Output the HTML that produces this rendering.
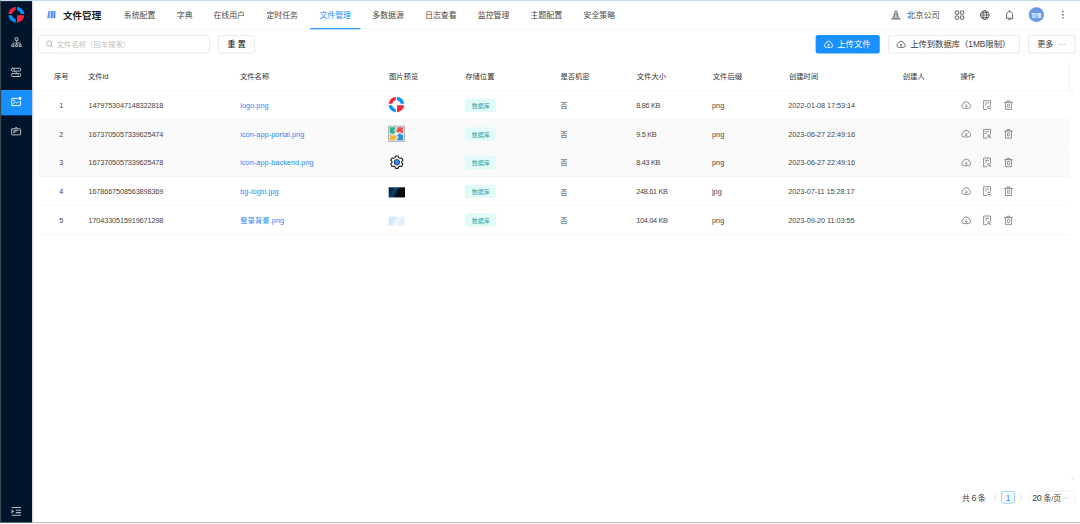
<!DOCTYPE html>
<html lang="zh-CN">
<head>
<meta charset="utf-8">
<title>文件管理</title>
<style>
html,body{margin:0;padding:0;background:#fff;overflow:hidden;}
body{width:1080px;height:524px;position:relative;font-family:"Liberation Sans", "Noto Sans CJK SC", sans-serif;}
#app{position:absolute;left:0;top:0;width:1920px;height:932px;transform:scale(0.5625);transform-origin:0 0;overflow:hidden;background:#fff;}
.a{position:absolute;box-sizing:border-box;}
.t{white-space:nowrap;}
</style>
</head>
<body>
<div id="app">
<div class="a " style="left:56.89px;top:2.31px;width:1863.11px;height:50.31px;background:#fff;border-bottom:1px solid #f0f0f0;"></div>
<div class="a " style="left:0.0px;top:0.0px;width:56.89px;height:929.33px;background:#001529;box-shadow:2px 0 6px rgba(0,21,41,.25);"></div>
<div class="a " style="left:0.0px;top:0.0px;width:1.69px;height:929.33px;background:#3a4550;"></div>
<div class="a " style="left:0.0px;top:0.0px;width:1920.0px;height:2.4px;background:#c3dcec;"></div>
<div class="a " style="left:0.0px;top:0.0px;width:1.69px;height:2.4px;background:#a3abaf;"></div>
<div class="a " style="left:56.89px;top:928.27px;width:1863.11px;height:1.33px;background:#c2c2c2;"></div>
<div class="a " style="left:0.0px;top:929.6px;width:1920.0px;height:2.84px;background:#fafafa;"></div>
<svg class="a" style="left:13.78px;top:11.38px;" width="30.22" height="30.22" viewBox="-8.5 -8.5 17.0 17.0"><path fill="#f7243f" d="M-0.680 -7.971A8.0 8.0 0 0 0 -7.971 -0.680L-4.347 -0.680A4.4 4.4 0 0 1 -0.680 -4.347Z"/><path fill="#0091ff" d="M0.680 -7.971A8.0 8.0 0 0 1 7.971 -0.680L4.347 -0.680A4.4 4.4 0 0 0 0.680 -4.347Z"/><path fill="#0091ff" d="M-0.680 7.971A8.0 8.0 0 0 1 -7.971 0.680L-4.347 0.680A4.4 4.4 0 0 0 -0.680 4.347Z"/><path fill="#f7243f" d="M0.680 7.971A8.0 8.0 0 0 0 7.971 0.680L0.680 0.680Z"/></svg>
<svg class="a" style="left:18.67px;top:65.42px;" width="21.33" height="21.33" viewBox="0 0 24 24"><g fill="none" stroke="#b4bcc4" stroke-width="2" stroke-linejoin="round" stroke-linecap="round"><rect x="9.500" y="2.500" width="5" height="5" stroke-width="1.800"/><path d="M12 8V13M4.500 16V13H19.500V16" stroke-width="1.600"/><rect x="3" y="16.500" width="3.500" height="3.500" stroke-width="1.800"/><rect x="10.250" y="16.500" width="3.500" height="3.500" stroke-width="1.800"/><rect x="17.500" y="16.500" width="3.500" height="3.500" stroke-width="1.800"/><path d="M12 13V16" stroke-width="1.600"/></g></svg>
<svg class="a" style="left:18.13px;top:117.69px;" width="21.33" height="21.33" viewBox="0 0 24 24"><g fill="none" stroke="#b4bcc4" stroke-width="2" stroke-linejoin="round" stroke-linecap="round"><rect x="3" y="3.800" width="18" height="5.800" rx="1.500"/><rect x="3" y="14.400" width="18" height="5.800" rx="1.500"/><path d="M9 9.600L15 14.400M7 6.700H9M15 17.300H17" stroke-width="1.600"/></g></svg>
<div class="a " style="left:1.69px;top:160.0px;width:55.2px;height:44.8px;background:#1890ff;"></div>
<svg class="a" style="left:18.49px;top:170.49px;" width="21.33" height="21.33" viewBox="0 0 24 24"><g fill="none" stroke="#fff" stroke-width="2" stroke-linejoin="round" stroke-linecap="round"><path d="M14 5.500H3.500V20H20.500V11" /><path d="M6.500 9.500H9M6.500 16L10 12.500L13 15L16.500 12.500" stroke-width="1.600"/><circle cx="19.500" cy="5.500" r="3" fill="#fff" stroke="none"/></g></svg>
<svg class="a" style="left:18.49px;top:222.22px;" width="21.33" height="21.33" viewBox="0 0 24 24"><g fill="none" stroke="#b4bcc4" stroke-width="2" stroke-linejoin="round" stroke-linecap="round"><rect x="3" y="8" width="18" height="12" rx="1"/><path d="M9.500 7.500L12 4.500L14.500 7.500"/><path d="M7.500 16.500V11.500H16M7.500 14H12" stroke-width="1.800"/></g></svg>
<svg class="a" style="left:17.96px;top:898.31px;" width="22.04" height="22.04" viewBox="0 0 24 24"><g fill="none" stroke="#b4bcc4" stroke-width="2" stroke-linejoin="round" stroke-linecap="round"><path d="M3 4.500H21M11 10H21M11 14.500H21M3 19.500H21" stroke-linecap="butt"/><path d="M3.500 9.500L7.500 12.200L3.500 15Z" fill="#b4bcc4" stroke-width="1"/></g></svg>
<svg class="a" style="left:83.2px;top:18.31px;" width="16.0" height="16.0" viewBox="0 0 12 12"><g><path d="M2.300 1.300H5.400L3.700 10.700H0.600Z" fill="#6a99fa"/><path d="M6.000 1.300H8.900L7.900 10.700H4.900Z" fill="#5b8ff9"/><path d="M9.300 1.300H11.800V10.700H8.800Z" fill="#4d80f2"/></g></svg>
<div class="a t" style="left:112.0px;top:12.91px;height:30px;line-height:30px;font-size:17px;color:#1a1a1a;font-weight:700;">文件管理</div>
<div class="a t" style="left:220.09px;top:12.2px;height:30px;line-height:30px;font-size:14px;color:#484848;font-weight:400;">系统配置</div>
<div class="a t" style="left:314.31px;top:12.2px;height:30px;line-height:30px;font-size:14px;color:#484848;font-weight:400;">字典</div>
<div class="a t" style="left:379.56px;top:12.2px;height:30px;line-height:30px;font-size:14px;color:#484848;font-weight:400;">在线用户</div>
<div class="a t" style="left:473.78px;top:12.2px;height:30px;line-height:30px;font-size:14px;color:#484848;font-weight:400;">定时任务</div>
<div class="a t" style="left:568.0px;top:12.2px;height:30px;line-height:30px;font-size:14px;color:#1890ff;font-weight:400;">文件管理</div>
<div class="a t" style="left:661.87px;top:12.2px;height:30px;line-height:30px;font-size:14px;color:#484848;font-weight:400;">多数据源</div>
<div class="a t" style="left:755.73px;top:12.2px;height:30px;line-height:30px;font-size:14px;color:#484848;font-weight:400;">日志查看</div>
<div class="a t" style="left:849.42px;top:12.2px;height:30px;line-height:30px;font-size:14px;color:#484848;font-weight:400;">监控管理</div>
<div class="a t" style="left:943.29px;top:12.2px;height:30px;line-height:30px;font-size:14px;color:#484848;font-weight:400;">主题配置</div>
<div class="a t" style="left:1037.51px;top:12.2px;height:30px;line-height:30px;font-size:14px;color:#484848;font-weight:400;">安全策略</div>
<div class="a " style="left:551.11px;top:49.78px;width:90.31px;height:2.49px;background:#1890ff;"></div>
<svg class="a" style="left:1582.76px;top:16.53px;" width="19.56" height="19.56" viewBox="0 0 24 24"><g fill="none" stroke="#4a4a4a" stroke-width="1.700" stroke-linejoin="round"><path d="M9.800 20V3.500H14.200V20M9.800 7.500L5 20M14.200 7.500L19 20"/><path d="M2 20.500H22" stroke-width="2"/></g></svg>
<div class="a t" style="left:1612.44px;top:12.2px;height:30px;line-height:30px;font-size:14.6px;color:#484848;font-weight:400;">北京公司</div>
<svg class="a" style="left:1696.0px;top:16.53px;" width="19.56" height="19.56" viewBox="0 0 24 24"><g fill="none" stroke="#4a4a4a" stroke-width="1.800"><rect x="3" y="3" width="7" height="7" rx="0.800"/><rect x="14" y="3" width="7" height="7" rx="0.800"/><rect x="3" y="14" width="7" height="7" rx="0.800"/><rect x="14" y="14" width="7" height="7" rx="0.800"/></g></svg>
<svg class="a" style="left:1740.8px;top:16.53px;" width="19.56" height="19.56" viewBox="0 0 24 24"><g fill="none" stroke="#4a4a4a" stroke-width="1.800"><circle cx="12" cy="12" r="9.500"/><ellipse cx="12" cy="12" rx="4.200" ry="9.500"/><path d="M2.500 12H21.500M4 7H20M4 17H20"/></g></svg>
<svg class="a" style="left:1785.42px;top:16.89px;" width="19.56" height="19.56" viewBox="0 0 24 24"><g fill="none" stroke="#4a4a4a" stroke-width="1.800" stroke-linejoin="round"><path d="M5.500 17.500V11.500C5.500 7 8 4.500 12 4.500S18.500 7 18.500 11.500V17.500L20 19H4Z"/><path d="M12 2.500V4.500M10 21.500H14" stroke-linecap="round"/></g></svg>
<div class="a " style="left:1829.16px;top:12.62px;width:26.49px;height:26.84px;background:#6a98e6;border-radius:50%;"></div>
<div class="a t" style="left:1822.4px;width:40px;text-align:center;top:12.2px;height:30px;line-height:30px;font-size:9px;color:#fff;font-weight:500;">管理</div>
<div class="a " style="left:1887.82px;top:19.2px;width:3.02px;height:2.84px;background:#5a5a5a;border-radius:50%;"></div>
<div class="a " style="left:1887.82px;top:24.71px;width:3.02px;height:2.84px;background:#5a5a5a;border-radius:50%;"></div>
<div class="a " style="left:1887.82px;top:30.22px;width:3.02px;height:2.84px;background:#5a5a5a;border-radius:50%;"></div>
<div class="a " style="left:68.44px;top:62.58px;width:304.18px;height:32.71px;background:#fff;border:1px solid #d9d9d9;border-radius:4px;"></div>
<svg class="a" style="left:80.53px;top:71.47px;" width="14.93" height="14.93" viewBox="0 0 24 24"><g fill="none" stroke="#a6a6a6" stroke-width="2.200"><circle cx="10.500" cy="10.500" r="7.500"/><path d="M16 16L21 21" stroke-linecap="round"/></g></svg>
<div class="a t" style="left:100.8px;top:64.29px;height:30px;line-height:30px;font-size:13px;color:#bfbfbf;font-weight:400;letter-spacing:0.05px;">文件名称（回车搜索）</div>
<div class="a " style="left:388.27px;top:62.58px;width:64.53px;height:32.71px;background:#fff;border:1px solid #d9d9d9;border-radius:4px;"></div>
<div class="a t" style="left:380.62px;width:80px;text-align:center;top:64.29px;height:30px;line-height:30px;font-size:14px;color:#262626;font-weight:500;">重 置</div>
<div class="a " style="left:1449.78px;top:62.4px;width:114.67px;height:33.07px;background:#1890ff;border-radius:4px;"></div>
<svg class="a" style="left:1464.0px;top:69.87px;" width="18.13" height="18.13" viewBox="0 0 24 24"><g fill="none" stroke="#fff" stroke-width="2" stroke-linecap="round" stroke-linejoin="round"><path d="M6.500 19A4.600 4.600 0 0 1 5.400 10.000A6.700 6.700 0 0 1 18.600 10.000A4.600 4.600 0 0 1 17.500 19Z"/><path d="M12 16.500V11.500M9.800 13.500L12 11.300L14.200 13.500" stroke-width="1.700"/></g></svg>
<div class="a t" style="left:1488.53px;top:64.29px;height:30px;line-height:30px;font-size:14.75px;color:#fff;font-weight:400;">上传文件</div>
<div class="a " style="left:1579.2px;top:62.58px;width:233.6px;height:32.71px;background:#fff;border:1px solid #d9d9d9;border-radius:4px;"></div>
<svg class="a" style="left:1593.07px;top:69.87px;" width="18.13" height="18.13" viewBox="0 0 24 24"><g fill="none" stroke="#555" stroke-width="2" stroke-linecap="round" stroke-linejoin="round"><path d="M6.500 19A4.600 4.600 0 0 1 5.400 10.000A6.700 6.700 0 0 1 18.600 10.000A4.600 4.600 0 0 1 17.500 19Z"/><path d="M12 16.500V11.500M9.800 13.500L12 11.300L14.200 13.500" stroke-width="1.700"/></g></svg>
<div class="a t" style="left:1618.13px;top:64.29px;height:30px;line-height:30px;font-size:14.75px;color:#3a3a3a;font-weight:400;">上传到数据库（1MB限制）</div>
<div class="a " style="left:1827.91px;top:62.58px;width:84.09px;height:32.71px;background:#fff;border:1px solid #d9d9d9;border-radius:4px;"></div>
<div class="a t" style="left:1843.91px;top:64.29px;height:30px;line-height:30px;font-size:14.3px;color:#3a3a3a;font-weight:400;">更多</div>
<div class="a " style="left:1880.53px;top:78.58px;width:15.82px;height:1.24px;background:#c8c8c8;"></div>
<div class="a " style="left:68.44px;top:112.0px;width:1843.56px;height:49.65px;background:#fff;border-bottom:1px solid #f0f0f0;"></div>
<div class="a " style="left:1900.44px;top:112.0px;width:1.24px;height:48.71px;background:#f3f3f3;"></div>
<div class="a t" style="left:68.98px;width:80px;text-align:center;top:121.71px;height:30px;line-height:30px;font-size:13px;color:#333;font-weight:400;">序号</div>
<div class="a t" style="left:156.44px;top:121.71px;height:30px;line-height:30px;font-size:13px;color:#333;font-weight:400;">文件id</div>
<div class="a t" style="left:426.67px;top:121.71px;height:30px;line-height:30px;font-size:13px;color:#333;font-weight:400;">文件名称</div>
<div class="a t" style="left:691.56px;top:121.71px;height:30px;line-height:30px;font-size:13px;color:#333;font-weight:400;">图片预览</div>
<div class="a t" style="left:827.02px;top:121.71px;height:30px;line-height:30px;font-size:13px;color:#333;font-weight:400;">存储位置</div>
<div class="a t" style="left:996.27px;top:121.71px;height:30px;line-height:30px;font-size:13px;color:#333;font-weight:400;">是否机密</div>
<div class="a t" style="left:1132.09px;top:121.71px;height:30px;line-height:30px;font-size:13px;color:#333;font-weight:400;">文件大小</div>
<div class="a t" style="left:1267.2px;top:121.71px;height:30px;line-height:30px;font-size:13px;color:#333;font-weight:400;">文件后缀</div>
<div class="a t" style="left:1402.67px;top:121.71px;height:30px;line-height:30px;font-size:13px;color:#333;font-weight:400;">创建时间</div>
<div class="a t" style="left:1604.98px;top:121.71px;height:30px;line-height:30px;font-size:13px;color:#333;font-weight:400;">创建人</div>
<div class="a t" style="left:1707.38px;top:121.71px;height:30px;line-height:30px;font-size:13px;color:#333;font-weight:400;">操作</div>
<div class="a " style="left:68.44px;top:161.65px;width:1832.71px;height:51.13px;background:#fff;border-bottom:1px solid #f0f0f0;"></div>
<div class="a t" style="left:69.16px;width:80px;text-align:center;top:172.79px;height:30px;line-height:30px;font-size:13px;color:#484848;font-weight:400;">1</div>
<div class="a t" style="left:157.33px;top:172.79px;height:30px;line-height:30px;font-size:13px;color:#484848;font-weight:400;letter-spacing:-0.24px;">1479753047148322818</div>
<div class="a t" style="left:427.02px;top:172.79px;height:30px;line-height:30px;font-size:13px;color:#2b8cf7;font-weight:400;letter-spacing:0.1px;">logo.png</div>
<div class="a " style="left:826.49px;top:174.54px;width:55.82px;height:24.09px;background:#e2fbf8;border-radius:4.500px;"></div>
<div class="a t" style="left:814.49px;width:80px;text-align:center;top:173.05px;height:30px;line-height:30px;font-size:10.6px;color:#2fa5a8;font-weight:400;">数据库</div>
<div class="a t" style="left:995.91px;top:173.14px;height:30px;line-height:30px;font-size:13px;color:#484848;font-weight:400;">否</div>
<div class="a t" style="left:1131.02px;top:172.79px;height:30px;line-height:30px;font-size:13px;color:#484848;font-weight:400;letter-spacing:-0.55px;">8.86 KB</div>
<div class="a t" style="left:1265.78px;top:172.79px;height:30px;line-height:30px;font-size:13px;color:#484848;font-weight:400;">png</div>
<div class="a t" style="left:1401.42px;top:172.79px;height:30px;line-height:30px;font-size:13px;color:#484848;font-weight:400;letter-spacing:-0.1px;">2022-01-08 17:53:14</div>
<svg class="a" style="left:1707.56px;top:177.03px;" width="19.56" height="19.56" viewBox="0 0 24 24"><g fill="none" stroke="#707070" stroke-width="1.700" stroke-linecap="round" stroke-linejoin="round"><path d="M6.500 19A4.600 4.600 0 0 1 5.400 10.000A6.700 6.700 0 0 1 18.600 10.000A4.600 4.600 0 0 1 17.500 19Z"/><path d="M12 10.800V16M9.800 14L12 16.200L14.200 14" stroke-width="1.500"/></g></svg>
<svg class="a" style="left:1744.71px;top:177.03px;" width="19.56" height="19.56" viewBox="0 0 24 24"><g fill="none" stroke="#707070" stroke-width="1.700" stroke-linejoin="round"><path d="M12 21.500H4.500V2.500H19.500V13"/><path d="M8 7.500H16M8 11.500H11"/><circle cx="16" cy="17" r="2.800"/><path d="M18 19L20.500 21.500" stroke-linecap="round"/></g></svg>
<svg class="a" style="left:1782.58px;top:177.03px;" width="19.56" height="19.56" viewBox="0 0 24 24"><g fill="none" stroke="#707070" stroke-width="1.700" stroke-linejoin="round"><path d="M3.500 6H20.500M9 5.500V3H15V5.500" stroke-linecap="round"/><path d="M5.500 6V21.500H18.500V6"/><rect x="10" y="10" width="4" height="7" stroke-width="1.400"/></g></svg>
<div class="a " style="left:68.44px;top:212.78px;width:1832.71px;height:51.13px;background:#fafafa;border-bottom:1px solid #f0f0f0;"></div>
<div class="a t" style="left:69.16px;width:80px;text-align:center;top:223.92px;height:30px;line-height:30px;font-size:13px;color:#484848;font-weight:400;">2</div>
<div class="a t" style="left:157.33px;top:223.92px;height:30px;line-height:30px;font-size:13px;color:#484848;font-weight:400;letter-spacing:-0.24px;">1673705057339625474</div>
<div class="a t" style="left:427.02px;top:223.92px;height:30px;line-height:30px;font-size:13px;color:#2b8cf7;font-weight:400;letter-spacing:0.1px;">icon-app-portal.png</div>
<div class="a " style="left:826.49px;top:225.67px;width:55.82px;height:24.09px;background:#e2fbf8;border-radius:4.500px;"></div>
<div class="a t" style="left:814.49px;width:80px;text-align:center;top:224.18px;height:30px;line-height:30px;font-size:10.6px;color:#2fa5a8;font-weight:400;">数据库</div>
<div class="a t" style="left:995.91px;top:224.27px;height:30px;line-height:30px;font-size:13px;color:#484848;font-weight:400;">否</div>
<div class="a t" style="left:1131.02px;top:223.92px;height:30px;line-height:30px;font-size:13px;color:#484848;font-weight:400;letter-spacing:-0.55px;">9.5 KB</div>
<div class="a t" style="left:1265.78px;top:223.92px;height:30px;line-height:30px;font-size:13px;color:#484848;font-weight:400;">png</div>
<div class="a t" style="left:1401.42px;top:223.92px;height:30px;line-height:30px;font-size:13px;color:#484848;font-weight:400;letter-spacing:-0.1px;">2023-06-27 22:49:16</div>
<svg class="a" style="left:1707.56px;top:228.16px;" width="19.56" height="19.56" viewBox="0 0 24 24"><g fill="none" stroke="#707070" stroke-width="1.700" stroke-linecap="round" stroke-linejoin="round"><path d="M6.500 19A4.600 4.600 0 0 1 5.400 10.000A6.700 6.700 0 0 1 18.600 10.000A4.600 4.600 0 0 1 17.500 19Z"/><path d="M12 10.800V16M9.800 14L12 16.200L14.200 14" stroke-width="1.500"/></g></svg>
<svg class="a" style="left:1744.71px;top:228.16px;" width="19.56" height="19.56" viewBox="0 0 24 24"><g fill="none" stroke="#707070" stroke-width="1.700" stroke-linejoin="round"><path d="M12 21.500H4.500V2.500H19.500V13"/><path d="M8 7.500H16M8 11.500H11"/><circle cx="16" cy="17" r="2.800"/><path d="M18 19L20.500 21.500" stroke-linecap="round"/></g></svg>
<svg class="a" style="left:1782.58px;top:228.16px;" width="19.56" height="19.56" viewBox="0 0 24 24"><g fill="none" stroke="#707070" stroke-width="1.700" stroke-linejoin="round"><path d="M3.500 6H20.500M9 5.500V3H15V5.500" stroke-linecap="round"/><path d="M5.500 6V21.500H18.500V6"/><rect x="10" y="10" width="4" height="7" stroke-width="1.400"/></g></svg>
<div class="a " style="left:68.44px;top:263.91px;width:1832.71px;height:51.13px;background:#fafafa;border-bottom:1px solid #f0f0f0;"></div>
<div class="a t" style="left:69.16px;width:80px;text-align:center;top:275.04px;height:30px;line-height:30px;font-size:13px;color:#484848;font-weight:400;">3</div>
<div class="a t" style="left:157.33px;top:275.04px;height:30px;line-height:30px;font-size:13px;color:#484848;font-weight:400;letter-spacing:-0.24px;">1673705057339625478</div>
<div class="a t" style="left:427.02px;top:275.04px;height:30px;line-height:30px;font-size:13px;color:#2b8cf7;font-weight:400;letter-spacing:0.1px;">icon-app-backend.png</div>
<div class="a " style="left:826.49px;top:276.8px;width:55.82px;height:24.09px;background:#e2fbf8;border-radius:4.500px;"></div>
<div class="a t" style="left:814.49px;width:80px;text-align:center;top:275.31px;height:30px;line-height:30px;font-size:10.6px;color:#2fa5a8;font-weight:400;">数据库</div>
<div class="a t" style="left:995.91px;top:275.4px;height:30px;line-height:30px;font-size:13px;color:#484848;font-weight:400;">否</div>
<div class="a t" style="left:1131.02px;top:275.04px;height:30px;line-height:30px;font-size:13px;color:#484848;font-weight:400;letter-spacing:-0.55px;">8.43 KB</div>
<div class="a t" style="left:1265.78px;top:275.04px;height:30px;line-height:30px;font-size:13px;color:#484848;font-weight:400;">png</div>
<div class="a t" style="left:1401.42px;top:275.04px;height:30px;line-height:30px;font-size:13px;color:#484848;font-weight:400;letter-spacing:-0.1px;">2023-06-27 22:49:16</div>
<svg class="a" style="left:1707.56px;top:279.29px;" width="19.56" height="19.56" viewBox="0 0 24 24"><g fill="none" stroke="#707070" stroke-width="1.700" stroke-linecap="round" stroke-linejoin="round"><path d="M6.500 19A4.600 4.600 0 0 1 5.400 10.000A6.700 6.700 0 0 1 18.600 10.000A4.600 4.600 0 0 1 17.500 19Z"/><path d="M12 10.800V16M9.800 14L12 16.200L14.200 14" stroke-width="1.500"/></g></svg>
<svg class="a" style="left:1744.71px;top:279.29px;" width="19.56" height="19.56" viewBox="0 0 24 24"><g fill="none" stroke="#707070" stroke-width="1.700" stroke-linejoin="round"><path d="M12 21.500H4.500V2.500H19.500V13"/><path d="M8 7.500H16M8 11.500H11"/><circle cx="16" cy="17" r="2.800"/><path d="M18 19L20.500 21.500" stroke-linecap="round"/></g></svg>
<svg class="a" style="left:1782.58px;top:279.29px;" width="19.56" height="19.56" viewBox="0 0 24 24"><g fill="none" stroke="#707070" stroke-width="1.700" stroke-linejoin="round"><path d="M3.500 6H20.500M9 5.500V3H15V5.500" stroke-linecap="round"/><path d="M5.500 6V21.500H18.500V6"/><rect x="10" y="10" width="4" height="7" stroke-width="1.400"/></g></svg>
<div class="a " style="left:68.44px;top:315.04px;width:1832.71px;height:51.13px;background:#fff;border-bottom:1px solid #f0f0f0;"></div>
<div class="a t" style="left:69.16px;width:80px;text-align:center;top:326.17px;height:30px;line-height:30px;font-size:13px;color:#484848;font-weight:400;">4</div>
<div class="a t" style="left:157.33px;top:326.17px;height:30px;line-height:30px;font-size:13px;color:#484848;font-weight:400;letter-spacing:-0.24px;">1678667508563898369</div>
<div class="a t" style="left:427.02px;top:326.17px;height:30px;line-height:30px;font-size:13px;color:#2b8cf7;font-weight:400;letter-spacing:0.1px;">bg-login.jpg</div>
<div class="a " style="left:826.49px;top:327.93px;width:55.82px;height:24.09px;background:#e2fbf8;border-radius:4.500px;"></div>
<div class="a t" style="left:814.49px;width:80px;text-align:center;top:326.44px;height:30px;line-height:30px;font-size:10.6px;color:#2fa5a8;font-weight:400;">数据库</div>
<div class="a t" style="left:995.91px;top:326.53px;height:30px;line-height:30px;font-size:13px;color:#484848;font-weight:400;">否</div>
<div class="a t" style="left:1131.02px;top:326.17px;height:30px;line-height:30px;font-size:13px;color:#484848;font-weight:400;letter-spacing:-0.55px;">248.61 KB</div>
<div class="a t" style="left:1265.78px;top:326.17px;height:30px;line-height:30px;font-size:13px;color:#484848;font-weight:400;">jpg</div>
<div class="a t" style="left:1401.42px;top:326.17px;height:30px;line-height:30px;font-size:13px;color:#484848;font-weight:400;letter-spacing:-0.1px;">2023-07-11 15:28:17</div>
<svg class="a" style="left:1707.56px;top:330.42px;" width="19.56" height="19.56" viewBox="0 0 24 24"><g fill="none" stroke="#707070" stroke-width="1.700" stroke-linecap="round" stroke-linejoin="round"><path d="M6.500 19A4.600 4.600 0 0 1 5.400 10.000A6.700 6.700 0 0 1 18.600 10.000A4.600 4.600 0 0 1 17.500 19Z"/><path d="M12 10.800V16M9.800 14L12 16.200L14.200 14" stroke-width="1.500"/></g></svg>
<svg class="a" style="left:1744.71px;top:330.42px;" width="19.56" height="19.56" viewBox="0 0 24 24"><g fill="none" stroke="#707070" stroke-width="1.700" stroke-linejoin="round"><path d="M12 21.500H4.500V2.500H19.500V13"/><path d="M8 7.500H16M8 11.500H11"/><circle cx="16" cy="17" r="2.800"/><path d="M18 19L20.500 21.500" stroke-linecap="round"/></g></svg>
<svg class="a" style="left:1782.58px;top:330.42px;" width="19.56" height="19.56" viewBox="0 0 24 24"><g fill="none" stroke="#707070" stroke-width="1.700" stroke-linejoin="round"><path d="M3.500 6H20.500M9 5.500V3H15V5.500" stroke-linecap="round"/><path d="M5.500 6V21.500H18.500V6"/><rect x="10" y="10" width="4" height="7" stroke-width="1.400"/></g></svg>
<div class="a " style="left:68.44px;top:366.17px;width:1832.71px;height:51.13px;background:#fff;border-bottom:1px solid #f0f0f0;"></div>
<div class="a t" style="left:69.16px;width:80px;text-align:center;top:377.3px;height:30px;line-height:30px;font-size:13px;color:#484848;font-weight:400;">5</div>
<div class="a t" style="left:157.33px;top:377.3px;height:30px;line-height:30px;font-size:13px;color:#484848;font-weight:400;letter-spacing:-0.24px;">1704330515919671298</div>
<div class="a t" style="left:427.02px;top:378.19px;height:30px;line-height:30px;font-size:13px;color:#2b8cf7;font-weight:400;letter-spacing:0.1px;">登录背景.png</div>
<div class="a " style="left:826.49px;top:379.06px;width:55.82px;height:24.09px;background:#e2fbf8;border-radius:4.500px;"></div>
<div class="a t" style="left:814.49px;width:80px;text-align:center;top:377.57px;height:30px;line-height:30px;font-size:10.6px;color:#2fa5a8;font-weight:400;">数据库</div>
<div class="a t" style="left:995.91px;top:377.66px;height:30px;line-height:30px;font-size:13px;color:#484848;font-weight:400;">否</div>
<div class="a t" style="left:1131.02px;top:377.3px;height:30px;line-height:30px;font-size:13px;color:#484848;font-weight:400;letter-spacing:-0.55px;">104.04 KB</div>
<div class="a t" style="left:1265.78px;top:377.3px;height:30px;line-height:30px;font-size:13px;color:#484848;font-weight:400;">png</div>
<div class="a t" style="left:1401.42px;top:377.3px;height:30px;line-height:30px;font-size:13px;color:#484848;font-weight:400;letter-spacing:-0.1px;">2023-09-20 11:03:55</div>
<svg class="a" style="left:1707.56px;top:381.55px;" width="19.56" height="19.56" viewBox="0 0 24 24"><g fill="none" stroke="#707070" stroke-width="1.700" stroke-linecap="round" stroke-linejoin="round"><path d="M6.500 19A4.600 4.600 0 0 1 5.400 10.000A6.700 6.700 0 0 1 18.600 10.000A4.600 4.600 0 0 1 17.500 19Z"/><path d="M12 10.800V16M9.800 14L12 16.200L14.200 14" stroke-width="1.500"/></g></svg>
<svg class="a" style="left:1744.71px;top:381.55px;" width="19.56" height="19.56" viewBox="0 0 24 24"><g fill="none" stroke="#707070" stroke-width="1.700" stroke-linejoin="round"><path d="M12 21.500H4.500V2.500H19.500V13"/><path d="M8 7.500H16M8 11.500H11"/><circle cx="16" cy="17" r="2.800"/><path d="M18 19L20.500 21.500" stroke-linecap="round"/></g></svg>
<svg class="a" style="left:1782.58px;top:381.55px;" width="19.56" height="19.56" viewBox="0 0 24 24"><g fill="none" stroke="#707070" stroke-width="1.700" stroke-linejoin="round"><path d="M3.500 6H20.500M9 5.500V3H15V5.500" stroke-linecap="round"/><path d="M5.500 6V21.500H18.500V6"/><rect x="10" y="10" width="4" height="7" stroke-width="1.400"/></g></svg>
<svg class="a" style="left:690.49px;top:171.43px;" width="29.51" height="29.51" viewBox="-8.3 -8.3 16.6 16.6"><path fill="#f7243f" d="M-0.663 -7.772A7.8 7.8 0 0 0 -7.772 -0.663L-4.238 -0.663A4.29 4.29 0 0 1 -0.663 -4.238Z"/><path fill="#0091ff" d="M0.663 -7.772A7.8 7.8 0 0 1 7.772 -0.663L4.238 -0.663A4.29 4.29 0 0 0 0.663 -4.238Z"/><path fill="#0091ff" d="M-0.663 7.772A7.8 7.8 0 0 1 -7.772 0.663L-4.238 0.663A4.29 4.29 0 0 0 -0.663 4.238Z"/><path fill="#f7243f" d="M0.663 7.772A7.8 7.8 0 0 0 7.772 0.663L0.663 0.663Z"/></svg>
<svg class="a" style="left:690.49px;top:222.83px;" width="29.51" height="29.51" viewBox="0 0 32 32"><rect x="0" y="0" width="32" height="32" fill="#8c99ab"/><rect x="1.600" y="1.600" width="28.800" height="28.800" fill="#dde4ec"/><path d="M3.500 3.500H14V7.500a2.300 2.300 0 1 0 0 4.600V14.500H10.500a2.300 2.300 0 1 1 -4.600 0H3.500Z" fill="#2fb389"/><path d="M18 3.500H28.500V14.500H24.500a2.300 2.300 0 1 0 -4.600 0H18V12a2.300 2.300 0 1 1 0 -4.600Z" fill="#e9534a"/><path d="M3.500 18H6a2.300 2.300 0 1 0 4.600 0H14V20.500a2.300 2.300 0 1 1 0 4.600V28.500H3.500Z" fill="#f4b63f"/><path d="M18 18H20a2.300 2.300 0 1 1 4.600 0H28.500V28.500H18V25a2.300 2.300 0 1 0 0 -4.600Z" fill="#2d8fd8"/><circle cx="16" cy="16" r="3" fill="#f4f6f8"/></svg>
<svg class="a" style="left:690.93px;top:274.67px;" width="28.98" height="28.98" viewBox="0 1 32 30"><path d="M13.500 2.500h5l1 3.200 2.600 1.500 3.300-.8 2.500 4.300-2.300 2.500v3l2.300 2.500-2.500 4.300-3.300-.8-2.600 1.500-1 3.200h-5l-1-3.200-2.600-1.500-3.300.8-2.500-4.300 2.300-2.500v-3l-2.300-2.500 2.500-4.300 3.300.8 2.600-1.500z" fill="#fff" stroke="#1e1e1e" stroke-width="2.100" stroke-linejoin="round"/><circle cx="16" cy="14.700" r="5.400" fill="#2f8af5" stroke="#1e1e1e" stroke-width="1.500"/><circle cx="16" cy="14.700" r="3.600" fill="#2f8af5"/></svg>
<div class="a " style="left:691.02px;top:332.62px;width:28.8px;height:18.13px;background:linear-gradient(118deg,#04182a 0%,#07365a 28%,#0a4a78 36%,#06233a 47%,#0c0c10 55%,#080808 100%);"></div>
<div class="a " style="left:691.02px;top:385.42px;width:28.62px;height:15.64px;background:linear-gradient(112deg,#cfe5ff 0%,#d8eaff 32%,#f3f9ff 52%,#e1efff 72%,#edf5ff 100%);"></div>
<div class="a " style="left:1905.07px;top:167.11px;width:3.02px;height:2.13px;background:#e3e3e3;"></div>
<div class="a " style="left:1905.07px;top:851.38px;width:3.02px;height:1.96px;background:#e3e3e3;"></div>
<div class="a t" style="left:1710.22px;top:869.62px;height:30px;line-height:30px;font-size:14px;color:#444;font-weight:400;word-spacing:-1.2px;">共 <span style="font-size:16px;letter-spacing:-0.5px">6</span> 条</div>
<svg class="a" style="left:1763.56px;top:878.4px;" width="12.44" height="12.44" viewBox="0 0 24 24"><path d="M15.500 4L7.500 12L15.500 20" fill="none" stroke="#c4c4c4" stroke-width="2.200"/></svg>
<div class="a " style="left:1780.44px;top:873.24px;width:23.47px;height:22.22px;background:#fff;border:1px solid #4aa3ff;border-radius:4px;"></div>
<div class="a t" style="left:1772.18px;width:40px;text-align:center;top:869.62px;height:30px;line-height:30px;font-size:16px;color:#1890ff;font-weight:400;">1</div>
<svg class="a" style="left:1809.24px;top:878.4px;" width="12.44" height="12.44" viewBox="0 0 24 24"><path d="M8.500 4L16.500 12L8.500 20" fill="none" stroke="#c4c4c4" stroke-width="2.200"/></svg>
<div class="a " style="left:1828.62px;top:873.42px;width:83.38px;height:21.69px;background:#fff;border:1px solid #ececec;border-radius:3px;"></div>
<div class="a t" style="left:1835.2px;top:869.62px;height:30px;line-height:30px;font-size:14px;color:#444;font-weight:400;letter-spacing:-0.3px;"><span style="font-size:16px;letter-spacing:-1.2px">2</span><span style="font-size:16px">0</span> 条/页</div>
<svg class="a" style="left:1889.96px;top:879.11px;" width="11.73" height="11.73" viewBox="0 0 24 24"><path d="M4 8L12 16.500L20 8" fill="none" stroke="#c0c0c0" stroke-width="2.200"/></svg>
</div>
</body>
</html>
